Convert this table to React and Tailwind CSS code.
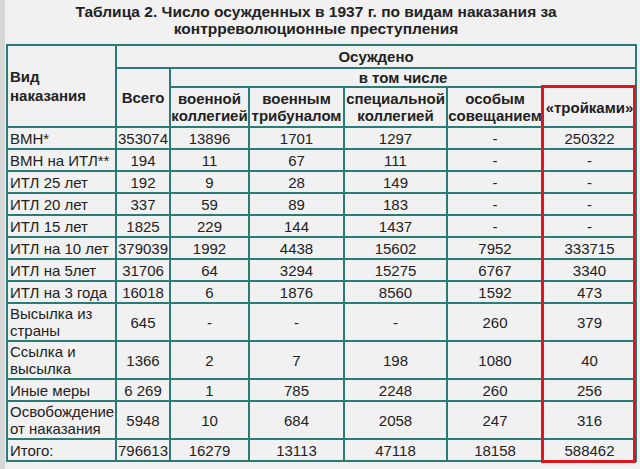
const rows = [
  [['ВМН*'], '353074', '13896', '1701', '1297', '-', '250322'],
  [['ВМН на ИТЛ**'], '194', '11', '67', '111', '-', '-'],
  [['ИТЛ 25 лет'], '192', '9', '28', '149', '-', '-'],
  [['ИТЛ 20 лет'], '337', '59', '89', '183', '-', '-'],
  [['ИТЛ 15 лет'], '1825', '229', '144', '1437', '-', '-'],
  [['ИТЛ на 10 лет'], '379039', '1992', '4438', '15602', '7952', '333715'],
  [['ИТЛ на 5лет'], '31706', '64', '3294', '15275', '6767', '3340'],
  [['ИТЛ на 3 года'], '16018', '6', '1876', '8560', '1592', '473'],
  [['Высылка из', 'страны'], '645', '-', '-', '-', '260', '379'],
  [['Ссылка и', 'высылка'], '1366', '2', '7', '198', '1080', '40'],
  [['Иные меры'], '6 269', '1', '785', '2248', '260', '256'],
  [['Освобождение', 'от наказания'], '5948', '10', '684', '2058', '247', '316'],
  [['Итого:'], '796613', '16279', '13113', '47118', '18158', '588462'],
];

const cell = 'border-2 border-[#2b7c79] px-0 py-0 align-middle whitespace-nowrap';
const head = `${cell} font-bold text-[15px] leading-[17px] text-center`;

export default function App() {
  return (
    <div className="flex min-h-[469px] w-[640px] bg-[#f1f1f1] text-[#222] font-['Liberation_Sans',Arial,sans-serif]">
      <div className="w-[5px] shrink-0 bg-[#d7d7d7]" />
      <div className="flex-1 pl-[1px]">
        <h2 className="pt-[3px] pr-[14px] h-[44px] text-center font-bold text-[15.5px] leading-[17px] text-[#222] font-['Liberation_Sans_Narrow','Liberation_Sans',Arial,sans-serif]">
          Таблица 2. Число осужденных в 1937 г. по видам наказания за
          <br />
          контрреволюционные преступления
        </h2>
        <div className="relative w-[629px]">
          <table className="w-[629px] table-fixed border-collapse text-[15px] leading-[17px]">
            <colgroup>
              <col className="w-[109px]" />
              <col className="w-[54px]" />
              <col className="w-[79px]" />
              <col className="w-[95px]" />
              <col className="w-[103px]" />
              <col className="w-[96px]" />
              <col className="w-[93px]" />
            </colgroup>
            <thead>
              <tr className="h-[23px]">
                <th rowSpan={3} className={`${cell} font-bold text-[15px] leading-[19px] text-left pl-[2px]`}>
                  Вид<br />наказания
                </th>
                <th colSpan={6} className={head}>Осуждено</th>
              </tr>
              <tr className="h-[19px]">
                <th rowSpan={2} className={head}>Всего</th>
                <th colSpan={5} className={head}>в том числе</th>
              </tr>
              <tr className="h-[40px]">
                <th className={head}>военной<br />коллегией</th>
                <th className={head}>военным<br />трибуналом</th>
                <th className={head}>специальной<br />коллегией</th>
                <th className={head}>особым<br />совещанием</th>
                <th className={head}>«тройками»</th>
              </tr>
            </thead>
            <tbody>
              {rows.map((r) => (
                <tr key={r[0][0]} className={r[0].length > 1 ? 'h-[38px]' : 'h-[22px]'}>
                  <td className={`${cell} text-left pl-[2px]`}>
                    {r[0].map((line, j) => (
                      <span key={j} className="block">{line}</span>
                    ))}
                  </td>
                  {r.slice(1).map((v, i) => (
                    <td key={i} className={`${cell} text-center`}>
                      {v}
                    </td>
                  ))}
                </tr>
              ))}
            </tbody>
          </table>
          <div className="absolute left-[535px] top-[41px] bottom-[-1px] w-[95px] border-[3px] border-[#e0161c] pointer-events-none" />
        </div>
      </div>
    </div>
  );
}
